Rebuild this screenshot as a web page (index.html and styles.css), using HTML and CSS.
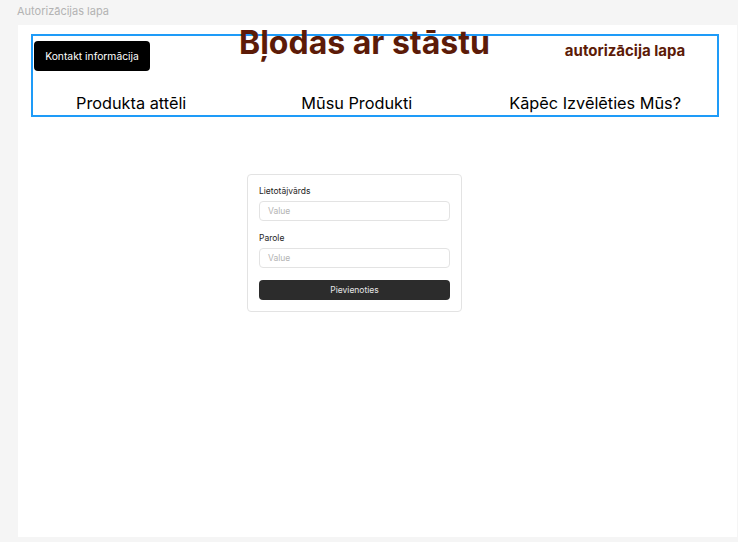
FILE: index.html
```html
<!DOCTYPE html>
<html lang="lv">
<head>
<meta charset="utf-8">
<title>Autorizācijas lapa</title>
<link rel="stylesheet" href="styles.css">
</head>
<body>
<div class="page-label">Autorizācijas lapa</div>
<div class="frame">
  <header class="header">
    <div class="top-row">
      <button class="contact-btn">Kontakt informācija</button>
      <h1 class="title">Bļodas ar stāstu</h1>
      <a class="auth-link">autorizācija lapa</a>
    </div>
    <nav class="nav">
      <a class="nav-item nav-1">Produkta attēli</a>
      <a class="nav-item nav-2">Mūsu Produkti</a>
      <a class="nav-item nav-3">Kāpēc Izvēlēties Mūs?</a>
    </nav>
  </header>
  <form class="card">
    <label class="field-label">Lietotājvārds</label>
    <div class="input">Value</div>
    <label class="field-label second">Parole</label>
    <div class="input">Value</div>
    <div class="submit">Pievienoties</div>
  </form>
</div>
</body>
</html>
```
FILE: styles.css
```css
* { box-sizing: border-box; }
html, body { margin: 0; padding: 0; }
body {
  background: #f5f5f5;
  font-family: Inter, "Noto Sans", sans-serif;
  width: 738px;
  height: 542px;
  overflow: hidden;
}
.page-label {
  height: 25px;
  padding-left: 17px;
  padding-top: 4px;
  font-size: 11px;
  line-height: 14px;
  color: #b3b3b3;
}
.frame {
  margin-left: 18px;
  width: 719px;
  height: 512px;
  background: #ffffff;
  padding-top: 9px;
  padding-left: 13px;
}
.header {
  width: 688px;
  height: 83px;
  border: 2px solid #1e9bf8;
}
.top-row {
  display: flex;
  align-items: flex-start;
  height: 35px;
}
.contact-btn {
  margin: 5px 0 0 1px;
  width: 116px;
  height: 30px;
  background: #000;
  color: #fff;
  border: none;
  border-radius: 4px;
  font-family: Inter, sans-serif;
  font-size: 10.3px;
  padding: 0;
}
.title {
  margin: -9px 0 0 89px;
  font-size: 32px;
  line-height: 32px;
  font-weight: 700;
  color: #5c1b08;
  white-space: nowrap;
}
.auth-link {
  margin: 6px 0 0 75px;
  font-size: 15px;
  line-height: 18px;
  font-weight: 700;
  color: #5c1b08;
  white-space: nowrap;
}
.nav {
  display: flex;
  margin-top: 22px;
  height: 20px;
}
.nav-item {
  font-size: 16.3px;
  line-height: 20px;
  color: #000;
  white-space: nowrap;
}
.nav-1 { margin-left: 43px; }
.nav-2 { margin-left: 115px; }
.nav-3 { margin-left: 97px; }
.card {
  display: flex;
  flex-direction: column;
  margin: 57px 0 0 216px;
  width: 215px;
  height: 138px;
  border: 1px solid #e3e3e3;
  border-radius: 4px;
  padding: 11px;
}
.field-label {
  font-size: 8.5px;
  line-height: 11px;
  color: #1e1e1e;
  margin-bottom: 4px;
}
.field-label.second { margin-top: 12px; }
.input {
  height: 20px;
  border: 1px solid #e3e3e3;
  border-radius: 4px;
  padding-left: 8px;
  font-size: 8.5px;
  line-height: 18px;
  color: #b3b3b3;
}
.submit {
  margin-top: 12px;
  height: 20px;
  background: #2c2c2c;
  border-radius: 4px;
  color: #e6e6e6;
  font-size: 8.5px;
  line-height: 20px;
  text-align: center;
}
```
